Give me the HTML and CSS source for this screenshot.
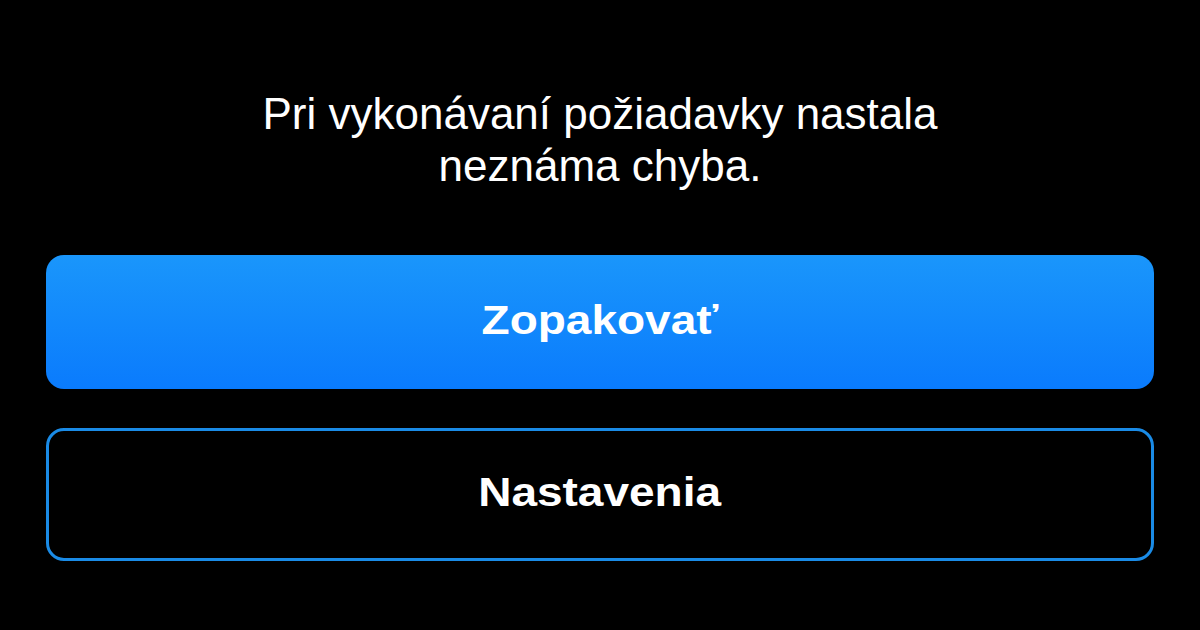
FILE: index.html
```html
<!DOCTYPE html>
<html lang="sk">
<head>
<meta charset="utf-8">
<link rel="stylesheet" href="styles.css">
</head>
<body>
<main class="screen">
  <p class="message">Pri vykonávaní požiadavky nastala<br>neznáma chyba.</p>
  <div class="actions">
    <button class="btn btn-primary"><span class="btn-label">Zopakovať</span></button>
    <button class="btn btn-secondary"><span class="btn-label">Nastavenia</span></button>
  </div>
</main>
</body>
</html>
```

FILE: styles.css
```css
html, body {
  margin: 0;
  padding: 0;
  background: #000;
}
.screen {
  width: 1200px;
  height: 630px;
  box-sizing: border-box;
  padding: 88px 46px 0;
  display: flex;
  flex-direction: column;
  font-family: "Liberation Sans", Arial, sans-serif;
  color: #fff;
}
.message {
  margin: 0;
  text-align: center;
  font-size: 44px;
  line-height: 52px;
}
.actions {
  margin-top: 63px;
  display: flex;
  flex-direction: column;
  gap: 39px;
}
.btn {
  display: flex;
  align-items: center;
  justify-content: center;
  box-sizing: border-box;
  width: 100%;
  height: 134px;
  border-radius: 18px;
  font-family: "Liberation Sans", Arial, sans-serif;
  font-weight: bold;
  font-size: 40px;
  color: #fff;
  padding: 0 0 4px;
}
.btn-label {
  display: inline-block;
  transform: scaleX(1.15);
}
.btn-primary {
  border: none;
  background: linear-gradient(to bottom, #1a96fb, #0a7bfd);
}
.btn-secondary {
  height: 133px;
  border: 3px solid #1a8be6;
  background: #000;
}
```
